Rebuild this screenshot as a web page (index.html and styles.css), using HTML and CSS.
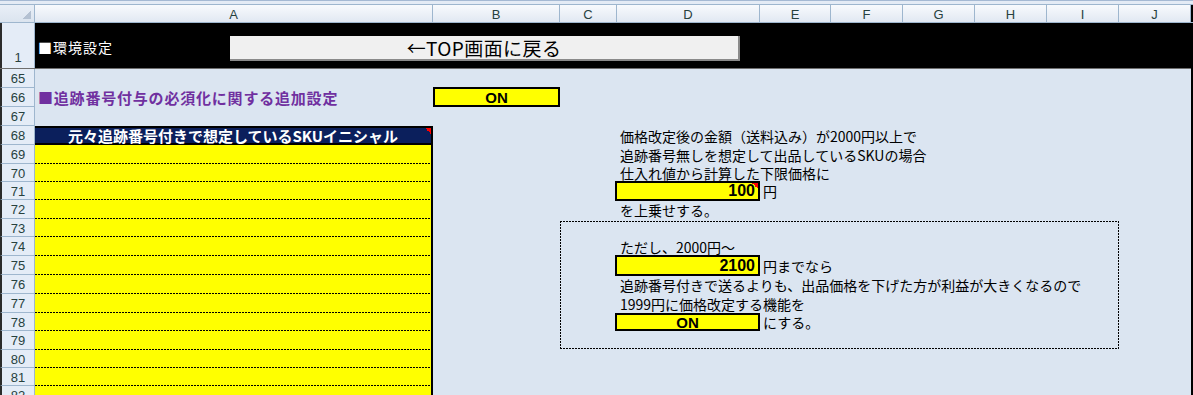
FILE: index.html
```html
<!DOCTYPE html>
<html lang="ja">
<head>
<meta charset="utf-8">
<title>環境設定</title>
<link rel="stylesheet" href="styles.css">
</head>
<body>
<div class="sheet">
  <div class="topbar"></div>
  <div class="ch corner"></div>
  <div class="ch">A</div>
  <div class="ch">B</div>
  <div class="ch">C</div>
  <div class="ch">D</div>
  <div class="ch">E</div>
  <div class="ch">F</div>
  <div class="ch">G</div>
  <div class="ch">H</div>
  <div class="ch">I</div>
  <div class="ch">J</div>
  <div class="ch chend"></div>

  <div class="rh rh1">1</div>
  <div class="banner">
    <span class="env">■環境設定</span>
    <div class="topbtn">←TOP画面に戻る</div>
  </div>
  <div class="edge"></div>
  <div class="freeze"></div>

  <div class="rhcol">
    <div class="rh">65</div><div class="rh">66</div><div class="rh">67</div><div class="rh">68</div>
    <div class="rh">69</div><div class="rh">70</div><div class="rh">71</div><div class="rh">72</div>
    <div class="rh">73</div><div class="rh">74</div><div class="rh">75</div><div class="rh">76</div>
    <div class="rh">77</div><div class="rh">78</div><div class="rh">79</div><div class="rh">80</div>
    <div class="rh">81</div><div class="rh">82</div>
  </div>

  <div class="title66">■追跡番号付与の必須化に関する追加設定</div>
  <div class="ybox on66">ON</div>

  <div class="thead">元々追跡番号付きで想定しているSKUイニシャル</div>
  <div class="ycol">
    <div class="yc"></div><div class="yc"></div><div class="yc"></div><div class="yc"></div>
    <div class="yc"></div><div class="yc"></div><div class="yc"></div><div class="yc"></div>
    <div class="yc"></div><div class="yc"></div><div class="yc"></div><div class="yc"></div>
    <div class="yc"></div><div class="yc"></div>
  </div>

  <div class="note r68">価格改定後の金額（送料込み）が2000円以上で</div>
  <div class="note r69">追跡番号無しを想定して出品しているSKUの場合</div>
  <div class="note r70">仕入れ値から計算した下限価格に</div>
  <div class="ybox num cmt r71">100</div>
  <div class="note after r71">円</div>
  <div class="note r72">を上乗せする。</div>

  <div class="dotbox"></div>
  <div class="note r74">ただし、2000円～</div>
  <div class="ybox num r75">2100</div>
  <div class="note after r75">円までなら</div>
  <div class="note r76">追跡番号付きで送るよりも、出品価格を下げた方が利益が大きくなるので</div>
  <div class="note r77">1999円に価格改定する機能を</div>
  <div class="ybox on78 r78">ON</div>
  <div class="note after r78">にする。</div>
</div>
</body>
</html>
```

FILE: styles.css
```css
* { box-sizing: border-box; margin: 0; padding: 0; }

html, body {
  width: 1193px;
  height: 395px;
  overflow: hidden;
  background: #dbe5f1;
}

body {
  font-family: "Noto Sans CJK JP", "Liberation Sans", sans-serif;
  color: #000;
}

.sheet {
  display: grid;
  grid-template-columns: 35px 398px 127px 57px 143px 71px 72px 72px 72px 72px 72px 2px;
  grid-template-rows: 4px 19px 45px 1px 19px 19px 19px 19px 19px 18px 18px 19px 18px 19px 19px 19px 19px 18px 19px 18px 18px 19px;
  height: 395px;
  overflow: hidden;
  background: #dbe5f1;
}

/* ---------- top strip & column headers ---------- */
.topbar {
  grid-row: 1;
  grid-column: 1 / -1;
  background: #e4ebf5;
  border-top: 1px solid #a5b9d3;
}

.ch {
  grid-row: 2;
  display: flex;
  align-items: center;
  justify-content: center;
  background: linear-gradient(#f8fafd, #e1e8f2);
  border-top: 1px solid #9eb6ce;
  border-right: 1px solid #9eb6ce;
  border-bottom: 1px solid #9eb6ce;
  font: 13px "Liberation Sans", sans-serif;
  color: #27413e;
  padding-top: 1px;
}

.corner {
  background:
    linear-gradient(135deg, transparent 50%, #b4c1d2 50%) no-repeat right 3px bottom 3px / 9px 9px,
    linear-gradient(#e9eff7, #dbe4ef);
}

.chend {
  border-right: none;
  background: #000;
}

/* ---------- row headers ---------- */
.rh {
  display: flex;
  align-items: center;
  justify-content: center;
  background: #e4ecf7;
  border-left: 2px solid #2b2b2b;
  border-right: 1px solid #9eb6ce;
  border-bottom: 1px solid #9eb6ce;
  font: 13px "Liberation Sans", sans-serif;
  color: #27413e;
  padding-top: 1px;
}

.rh1 {
  grid-row: 3;
  grid-column: 1;
  align-items: flex-end;
  padding-bottom: 3px;
  border-bottom: none;
}

.rhcol {
  grid-column: 1;
  grid-row: 5 / 23;
  display: grid;
  grid-template-rows: subgrid;
}

/* ---------- row 1 banner ---------- */
.banner {
  grid-row: 3;
  grid-column: 2 / 12;
  position: relative;
  background: #000;
  display: flex;
  align-items: center;
  padding: 3px 0 0 3px;
}

.env {
  color: #fff;
  font-size: 14px;
  letter-spacing: 1px;
  line-height: 1;
  white-space: nowrap;
}

.topbtn {
  position: absolute;
  left: 195px;
  top: 13px;
  width: 510px;
  height: 25px;
  background: #f0f0f0;
  border-right: 2px solid #8a8a8a;
  border-bottom: 2px solid #8a8a8a;
  display: flex;
  align-items: center;
  justify-content: center;
  font-size: 19px;
  letter-spacing: 0.4px;
  line-height: 1;
  color: #000;
  white-space: nowrap;
}

.edge {
  grid-column: 12;
  grid-row: 3 / 23;
  background: #000;
}

.freeze {
  grid-row: 4;
  grid-column: 1 / 12;
  background: #6e6e6e;
}

/* ---------- row 66 ---------- */
.title66 {
  grid-row: 6;
  grid-column: 2 / 3;
  display: flex;
  align-items: center;
  padding-left: 3px;
  color: #7030a0;
  font-weight: bold;
  font-size: 15px;
  letter-spacing: 0.8px;
  line-height: 1;
  white-space: nowrap;
}

.ybox {
  background: #ffff00;
  border: 2px solid #000;
  display: flex;
  align-items: center;
  font-family: "Liberation Sans", sans-serif;
  font-weight: bold;
  line-height: 1;
}

.on66 {
  grid-row: 6;
  grid-column: 3 / 4;
  justify-content: center;
  font-size: 15px;
  margin-top: -1px;
}

/* ---------- table ---------- */
.thead {
  grid-row: 8;
  grid-column: 2 / 3;
  background:
    linear-gradient(225deg, #ff0000 0 50%, transparent 50%) no-repeat top right / 6px 6px,
    #0b1f5c;
  border-top: 2px solid #000;
  border-right: 2px solid #000;
  border-bottom: 2px solid #000;
  color: #fff;
  font-weight: bold;
  font-size: 15px;
  line-height: 1;
  display: flex;
  align-items: center;
  justify-content: center;
  white-space: nowrap;
}

.ycol {
  grid-column: 2;
  grid-row: 9 / 23;
  display: grid;
  grid-template-rows: subgrid;
  background: #ffff00;
  border-right: 2px solid #000;
}

.yc {
  background: repeating-linear-gradient(90deg, #000 0 2px, transparent 2px 3px) no-repeat left bottom / 100% 1px;
}

/* ---------- right side notes ---------- */
.note {
  grid-column: 5 / 12;
  display: flex;
  align-items: center;
  padding-left: 3px;
  font-size: 14px;
  line-height: 1;
  white-space: nowrap;
  color: #000;
}

.note.after { grid-column: 6 / 12; }

.r68 { grid-row: 8; }
.r69 { grid-row: 9; }
.r70 { grid-row: 10; }
.r71 { grid-row: 11; }
.r72 { grid-row: 12; }
.r74 { grid-row: 14; }
.r75 { grid-row: 15; }
.r76 { grid-row: 16; }
.r77 { grid-row: 17; }
.r78 { grid-row: 18; }

.num {
  grid-column: 5 / 6;
  margin: -1px 0 -1px -2px;
  justify-content: flex-end;
  padding-right: 3px;
  font-size: 16px;
}

.cmt {
  background:
    linear-gradient(225deg, #ff0000 0 50%, transparent 50%) no-repeat top right / 6px 6px,
    #ffff00;
}

.on78 {
  grid-column: 5 / 6;
  margin: 0 0 0 -2px;
  justify-content: center;
  font-size: 15px;
}

.dotbox {
  grid-row: 13 / 20;
  grid-column: 4 / 11;
  margin-top: 2px;
  margin-bottom: 1px;
  background:
    repeating-linear-gradient(90deg, #000 0 2px, transparent 2px 3px) no-repeat left top / 100% 1px,
    repeating-linear-gradient(90deg, #000 0 2px, transparent 2px 3px) no-repeat left bottom / 100% 1px,
    repeating-linear-gradient(180deg, #000 0 2px, transparent 2px 3px) no-repeat left top / 1px 100%,
    repeating-linear-gradient(180deg, #000 0 2px, transparent 2px 3px) no-repeat right top / 1px 100%;
}
```
